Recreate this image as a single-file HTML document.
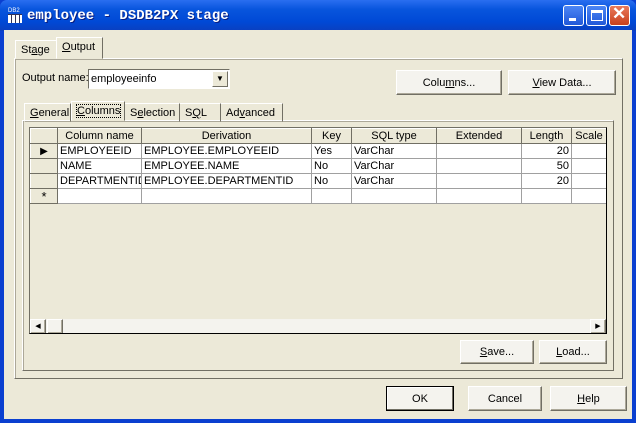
<!DOCTYPE html>
<html><head><style>
*{box-sizing:border-box;margin:0;padding:0}
body{width:636px;height:423px;overflow:hidden;background:#0A3FD0;font-family:"Liberation Sans",sans-serif;font-size:11px;color:#000;position:relative}
.a{position:absolute}
#tb{left:0;top:0;width:636px;height:31px;background:linear-gradient(#2A6EF0,#0855DD 30%,#0049D6 70%,#0A3FBF);border-radius:7px 7px 0 0}
#body{left:4px;top:30px;width:628px;height:389px;background:#ECE9D8}
.btn{position:absolute;background:#F4F3EE;border:1px solid;border-color:#fff #716F64 #716F64 #fff;box-shadow:inset -1px -1px 0 #ACA899;text-align:center;font-size:11px}
.cap{position:absolute;width:21px;height:21px;top:5px;border:1px solid #fff;border-radius:3px;background:linear-gradient(#4C86F5,#2158D8)}
.tab{position:absolute;height:19px;border:1px solid;border-color:#fff #716F64 transparent #fff;padding:3px 5px 0;white-space:nowrap}
.panel{position:absolute;border:1px solid;border-color:#fff #716F64 #716F64 #fff;box-shadow:1px 1px 0 #ACA899 inset}
table{border-collapse:collapse;table-layout:fixed}
td{border:1px solid #A0A0A0;height:15px;padding:0 2px;font-size:11px;line-height:13px;white-space:nowrap;overflow:hidden;background:#fff}
tr.h td{background:#ECE9D8;text-align:center;border-color:#fff #716F64 #716F64 #fff;border-right:1px solid #716F64}
td.rh{background:#ECE9D8;border-color:#fff #716F64 #716F64 #fff}
u{text-decoration:underline}
</style></head><body>
<div id="tb" class="a"></div>
<div class="a" style="left:8px;top:8px;width:16px;height:16px;">
<div style="font-size:6px;color:#fff;line-height:6px">DB2</div>
<div style="width:14px;height:9px;background:repeating-linear-gradient(90deg,#fff 0 3px,#335 3px 4px),#fff;border-top:1px solid #335"></div></div>
<div class="a" style="left:27px;top:8px;color:#fff;font:bold 14px 'Liberation Mono',monospace;text-shadow:1px 1px 0 #0A1E80">employee - DSDB2PX stage</div>
<div class="cap" style="left:563px"><div class="a" style="left:5px;top:12px;width:7px;height:3px;background:#fff"></div></div>
<div class="cap" style="left:586px"><div class="a" style="left:4px;top:4px;width:12px;height:11px;border:1px solid #fff;border-top-width:3px"></div></div>
<div class="cap" style="left:609px;background:linear-gradient(#E97A5A,#C8401C)"><div class="a" style="left:2px;top:-2px;color:#fff;font:bold 17px 'Liberation Sans'">✕</div></div>
<div id="body" class="a"></div>
<div class="panel" style="left:14px;top:58px;width:609px;height:321px"></div>
<div class="tab" style="left:15px;top:40px;width:41px;border-right:none;background:#ECE9D8">St<u>a</u>ge</div>
<div class="tab" style="left:56px;top:37px;width:47px;height:22px;background:#ECE9D8;border-bottom:1px solid #ECE9D8"><u>O</u>utput</div>
<div class="a" style="left:22px;top:72px">Output name:</div>
<div class="a" style="left:88px;top:69px;width:142px;height:20px;background:#fff;border:1px solid;border-color:#716F64 #fff #fff #716F64;padding:3px 2px">employeeinfo
<div class="a" style="right:1px;top:1px;width:16px;height:16px;background:#ECE9D8;border:1px solid;border-color:#fff #716F64 #716F64 #fff;font-size:8px;text-align:center;line-height:14px">▼</div></div>
<div class="btn" style="left:396px;top:70px;width:106px;height:25px;padding-top:6px">Colu<u>m</u>ns...</div>
<div class="btn" style="left:508px;top:70px;width:108px;height:25px;padding-top:6px"><u>V</u>iew Data...</div>
<div class="panel" style="left:22px;top:120px;width:592px;height:251px"></div>
<div class="tab" style="left:24px;top:103px;width:47px;border-right:1px solid #716F64"><u>G</u>eneral</div>
<div class="tab" style="left:71px;top:101px;width:54px;height:20px;background:#ECE9D8;border-bottom:1px solid #ECE9D8"><span style="outline:1px dotted #000"><u>C</u>olumns</span></div>
<div class="tab" style="left:125px;top:103px;width:55px;border-left:none">S<u>e</u>lection</div>
<div class="tab" style="left:180px;top:103px;width:41px;border-left:none">S<u>Q</u>L</div>
<div class="tab" style="left:221px;top:103px;width:62px;border-left:none">Ad<u>v</u>anced</div>
<div class="a" style="left:29px;top:127px;width:578px;height:207px;background:#ECE9D8;border:1px solid #716F64;border-right-color:#000;border-bottom-color:#000;overflow:hidden">
<table style="width:576px">
<colgroup><col style="width:27px"><col style="width:84px"><col style="width:170px"><col style="width:40px"><col style="width:85px"><col style="width:85px"><col style="width:50px"><col style="width:35px"></colgroup>
<tr class="h"><td></td><td>Column name</td><td>Derivation</td><td>Key</td><td>SQL type</td><td>Extended</td><td>Length</td><td>Scale</td></tr>
<tr><td class="rh" style="text-align:center;font-size:10px">▶</td><td>EMPLOYEEID</td><td>EMPLOYEE.EMPLOYEEID</td><td>Yes</td><td>VarChar</td><td></td><td style="text-align:right">20</td><td></td></tr>
<tr><td class="rh"></td><td>NAME</td><td>EMPLOYEE.NAME</td><td>No</td><td>VarChar</td><td></td><td style="text-align:right">50</td><td></td></tr>
<tr><td class="rh"></td><td>DEPARTMENTID</td><td>EMPLOYEE.DEPARTMENTID</td><td>No</td><td>VarChar</td><td></td><td style="text-align:right">20</td><td></td></tr>
<tr><td class="rh" style="text-align:center;font-size:13px">*</td><td></td><td></td><td></td><td></td><td></td><td></td><td></td></tr>
</table>
<div class="a" style="left:0;top:191px;width:576px;height:15px;background:#F4F3EE">
<div class="btn" style="left:0;top:0;width:16px;height:15px;font-size:7px;line-height:13px">◀</div>
<div class="btn" style="left:17px;top:0;width:16px;height:15px"></div>
<div class="btn" style="right:0;top:0;width:16px;height:15px;font-size:7px;line-height:13px">▶</div>
</div></div>
<div class="btn" style="left:460px;top:340px;width:74px;height:24px;padding-top:5px"><u>S</u>ave...</div>
<div class="btn" style="left:539px;top:340px;width:68px;height:24px;padding-top:5px"><u>L</u>oad...</div>
<div class="btn" style="left:386px;top:386px;width:68px;height:25px;padding-top:6px;border:1px solid #000;box-shadow:inset -1px -1px 0 #716F64,inset 1px 1px 0 #fff">OK</div>
<div class="btn" style="left:468px;top:386px;width:74px;height:25px;padding-top:6px">Cancel</div>
<div class="btn" style="left:550px;top:386px;width:77px;height:25px;padding-top:6px"><u>H</u>elp</div>
</body></html>
